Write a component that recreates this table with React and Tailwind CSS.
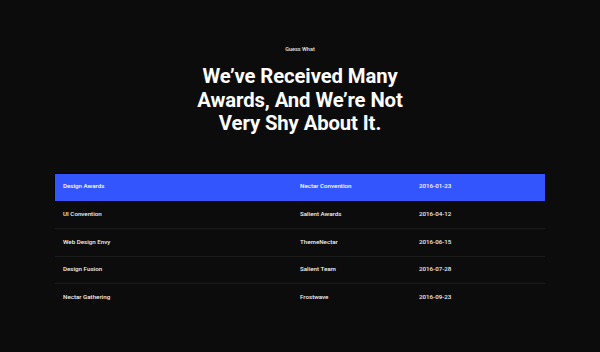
const rows = [
  { name: 'Design Awards', org: 'Nectar Convention', date: '2016-01-23', active: true },
  { name: 'UI Convention', org: 'Salient Awards', date: '2016-04-12' },
  { name: 'Web Design Envy', org: 'ThemeNectar', date: '2016-06-15' },
  { name: 'Design Fusion', org: 'Salient Team', date: '2016-07-28' },
  { name: 'Nectar Gathering', org: 'Frostwave', date: '2016-09-23' },
];

export default function App() {
  return (
    <div className="w-[600px] h-[352px] bg-[#0c0c0c] text-white font-['Roboto',sans-serif] overflow-hidden">
      {/* Heading */}
      <div className="pt-[44px] flex flex-col items-center">
        <p className="text-[5.5px] leading-[10px] font-medium text-[#e6e6e6]">Guess What</p>
        <h1 className="mt-[11px] text-[20.3px] leading-[23.5px] font-bold text-center tracking-[-0.1px]">
          We’ve Received Many
          <br />
          Awards, And We’re Not
          <br />
          Very Shy About It.
        </h1>
      </div>

      {/* Awards table */}
      <div className="mt-[38px] mx-[55px] text-[6.2px] font-medium text-[#f2f2f2]">
        {rows.map((row, i) => (
          <div
            key={row.name}
            className={`grid grid-cols-[237px_119px_1fr] items-center px-[8px] ${
              row.active
                ? 'h-[27px] bg-[#3355fe] text-white shadow-[0_0_0_1px_#050505]'
                : `h-[27.6px] ${i > 1 ? 'border-t border-[#1c1c1c]' : ''}`
            }`}
          >
            <span>{row.name}</span>
            <span>{row.org}</span>
            <span>{row.date}</span>
          </div>
        ))}
      </div>
    </div>
  );
}
